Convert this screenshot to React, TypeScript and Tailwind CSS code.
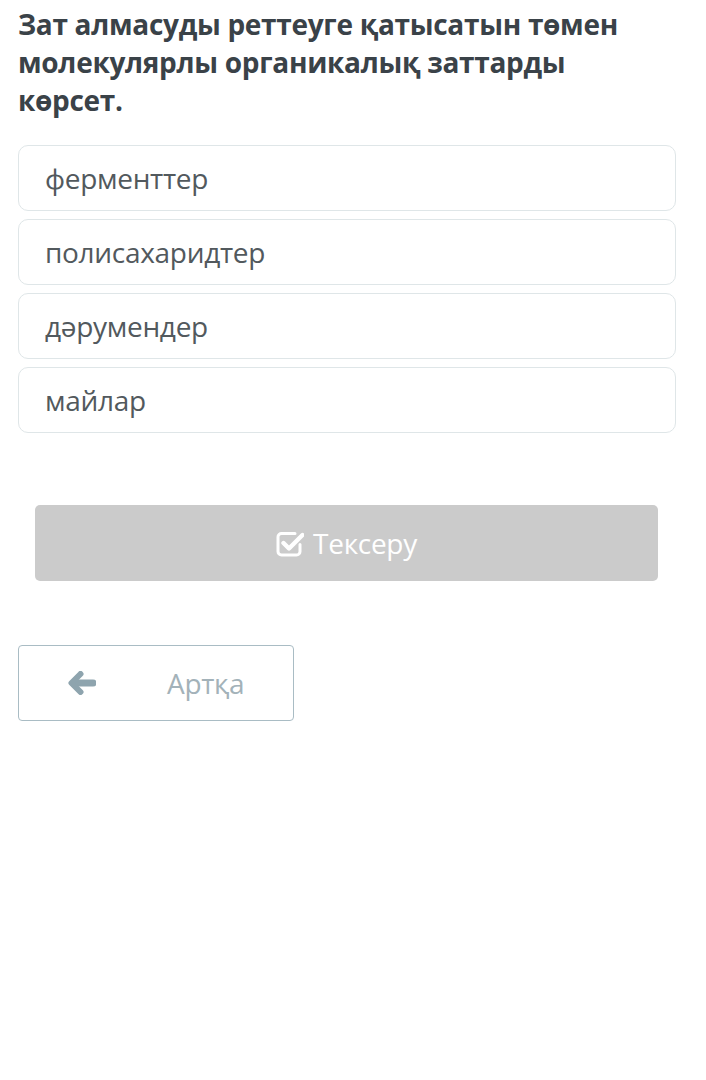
const options = ["ферменттер", "полисахаридтер", "дәрумендер", "майлар"];

function CheckSquareIcon() {
  return (
    <svg width="28" height="27" viewBox="0 0 28 27" fill="none">
      <path
        d="M19 3.5H5.5A3.5 3.5 0 0 0 2 7v14.5a3.5 3.5 0 0 0 3.5 3.5h15a3.5 3.5 0 0 0 3.5-3.5v-7"
        stroke="white"
        strokeWidth="3"
        strokeLinecap="round"
      />
      <path
        d="M7.5 13l5.5 5.5L26.5 5"
        stroke="white"
        strokeWidth="4.4"
        strokeLinecap="round"
        strokeLinejoin="round"
      />
    </svg>
  );
}

function ArrowIcon() {
  return (
    <svg width="28" height="24" viewBox="0 0 28 24" fill="none">
      <path
        d="M25 12H7"
        stroke="#8ea4ae"
        strokeWidth="7"
        strokeLinecap="round"
      />
      <path
        d="M12.5 3L3.5 12l9 9"
        stroke="#8ea4ae"
        strokeWidth="6"
        strokeLinecap="round"
        strokeLinejoin="round"
      />
    </svg>
  );
}

export default function App() {
  return (
    <div className="w-[706px] min-h-[1080px] bg-white font-['Open_Sans',sans-serif]">
      <div className="px-[18px] pt-[5px]">
        <h1 className="w-[640px] text-[28px] leading-[38px] font-bold text-[#3a4248] tracking-[-0.3px]">
          Зат алмасуды реттеуге қатысатын төмен молекулярлы органикалық заттарды көрсет.
        </h1>

        <div className="mt-[26px] flex flex-col gap-[8px] w-[658px]">
          {options.map((o) => (
            <div
              key={o}
              className="h-[66px] rounded-[10px] border border-[#dfe6e8] flex items-center px-[26px] text-[28px] text-[#52595d] tracking-[-0.3px]"
            >
              {o}
            </div>
          ))}
        </div>

        <div className="mt-[72px] pl-[17px] pr-[30px]">
          <div className="h-[76px] rounded-[5px] bg-[#cbcbcb] flex items-center justify-center gap-[9px] text-white text-[28px] tracking-[-0.3px]">
            <CheckSquareIcon />
            <span>Тексеру</span>
          </div>
        </div>

        <div className="mt-[64px] w-[276px] h-[76px] rounded-[4px] border border-[#a9bcc4] flex items-center">
          <div className="ml-[49px]">
            <ArrowIcon />
          </div>
          <span className="ml-[71px] text-[28px] text-[#a3b2b9] tracking-[-0.3px]">Артқа</span>
        </div>
      </div>
    </div>
  );
}
